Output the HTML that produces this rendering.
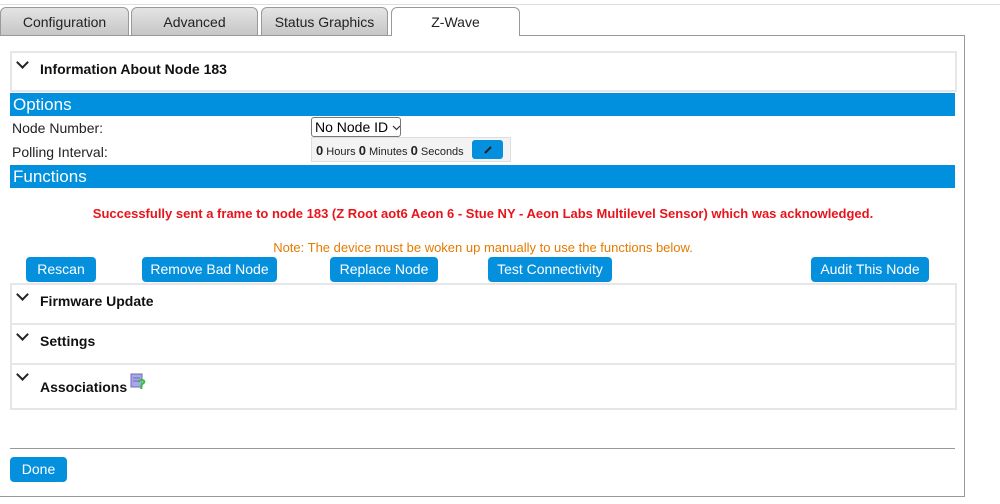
<!DOCTYPE html>
<html><head><style>
body{margin:0;width:1000px;height:504px;background:#fff;font-family:"Liberation Sans",sans-serif;position:relative;overflow:hidden}
.a{position:absolute}
.topline{left:0;top:4px;width:1000px;height:1px;background:#ddd}
.tab{top:7px;height:28px;border:1px solid #999;border-bottom:none;border-radius:6px 6px 0 0;background:linear-gradient(#e4e4e4,#c6c6c6);font-size:14px;color:#222;text-align:center;line-height:28px;box-sizing:border-box}
.sel{background:#fff;height:29px}
.box{left:-1px;top:35px;width:966px;height:462px;border:1px solid #999;box-sizing:border-box}
.panel{left:10px;width:947px;border:2px solid #e6e6e6;box-sizing:border-box;background:#fff}
.ttl{position:absolute;left:28px;font-weight:bold;font-size:14px;color:#111}
.chev{position:absolute;left:6px;width:7px;height:7px;border-right:2px solid #222;border-bottom:2px solid #222;transform:rotate(45deg)}
.bar{left:10px;width:945px;height:23px;background:#0090dd;color:#fff;font-size:17px;line-height:23px;padding-left:3px;box-sizing:border-box}
.lbl{font-size:14px;color:#222}
.btn{top:257px;height:25px;background:#0590dd;color:#fff;border-radius:4px;font-size:14px;text-align:center;line-height:25px}
</style></head><body>
<div class="a topline"></div>
<div class="a box"></div>
<div class="a tab" style="left:0;width:129px">Configuration</div>
<div class="a tab" style="left:131px;width:127px">Advanced</div>
<div class="a tab" style="left:261px;width:127px">Status Graphics</div>
<div class="a tab sel" style="left:391px;width:129px">Z-Wave</div>

<div class="a panel" style="top:51px;height:41px"><div class="chev" style="top:5px"></div><div class="ttl" style="top:8px">Information About Node 183</div></div>
<div class="a bar" style="top:93px">Options</div>
<div class="a lbl" style="left:12px;top:120px">Node Number:</div>
<div class="a" style="left:311px;top:117px;width:85px;height:18px;border:1px solid #777;border-radius:3px;font-size:14px;line-height:18px;padding-left:3px;box-sizing:content-box;white-space:nowrap;overflow:hidden">No Node ID <svg width="9" height="6" style="vertical-align:middle"><polyline points="1,1 4.5,4.5 8,1" fill="none" stroke="#333" stroke-width="1.2"/></svg></div>
<div class="a lbl" style="left:12px;top:144px">Polling Interval:</div>
<div class="a" style="left:311px;top:137px;width:200px;height:25px;background:#f3f3f3;border:1px solid #ddd;font-size:11px;line-height:25px;color:#222;padding-left:4px;box-sizing:border-box"><b style="font-size:13px">0</b> Hours <b style="font-size:13px">0</b> Minutes <b style="font-size:13px">0</b> Seconds</div>
<div class="a" style="left:472px;top:140px;width:31px;height:19px;background:#0590dd;border-radius:3px"><svg width="31" height="19"><line x1="13" y1="13" x2="19" y2="7" stroke="#222" stroke-width="2"/></svg></div>
<div class="a bar" style="top:165px">Functions</div>
<div class="a" style="left:0;width:966px;top:206px;text-align:center;color:#e8141c;font-weight:bold;font-size:13px">Successfully sent a frame to node 183 (Z Root aot6 Aeon 6 - Stue NY - Aeon Labs Multilevel Sensor) which was acknowledged.</div>
<div class="a" style="left:0;width:966px;top:240px;text-align:center;color:#e57b00;font-size:13px">Note: The device must be woken up manually to use the functions below.</div>
<div class="a btn" style="left:26px;width:70px">Rescan</div>
<div class="a btn" style="left:142px;width:135px">Remove Bad Node</div>
<div class="a btn" style="left:330px;width:108px">Replace Node</div>
<div class="a btn" style="left:488px;width:124px">Test Connectivity</div>
<div class="a btn" style="left:811px;width:118px">Audit This Node</div>
<div class="a panel" style="top:283px;height:127px"></div>
<div class="a" style="left:10px;top:323px;width:947px;height:2px;background:#e6e6e6"></div>
<div class="a" style="left:10px;top:363px;width:947px;height:2px;background:#e6e6e6"></div>
<div class="chev a" style="left:18px;top:290px"></div><div class="a ttl" style="left:40px;top:293px">Firmware Update</div>
<div class="chev a" style="left:18px;top:330px"></div><div class="a ttl" style="left:40px;top:333px">Settings</div>
<div class="chev a" style="left:18px;top:370px"></div><div class="a ttl" style="left:40px;top:379px">Associations</div>
<svg class="a" style="left:130px;top:373px" width="17" height="17"><rect x="1" y="1" width="11" height="13" fill="#a9a7e8" stroke="#6b6bb8"/><line x1="3" y1="5" x2="10" y2="5" stroke="#6b6bb8"/><line x1="3" y1="8" x2="10" y2="8" stroke="#6b6bb8"/><text x="7" y="16" font-size="15" font-weight="bold" fill="#22cc22" font-family="Liberation Sans">?</text></svg>
<div class="a" style="left:10px;top:448px;width:945px;height:1px;background:#999"></div>
<div class="a" style="left:10px;top:457px;width:57px;height:25px;background:#0590dd;color:#fff;border-radius:4px;font-size:14px;line-height:25px;text-align:center">Done</div>
</body></html>
